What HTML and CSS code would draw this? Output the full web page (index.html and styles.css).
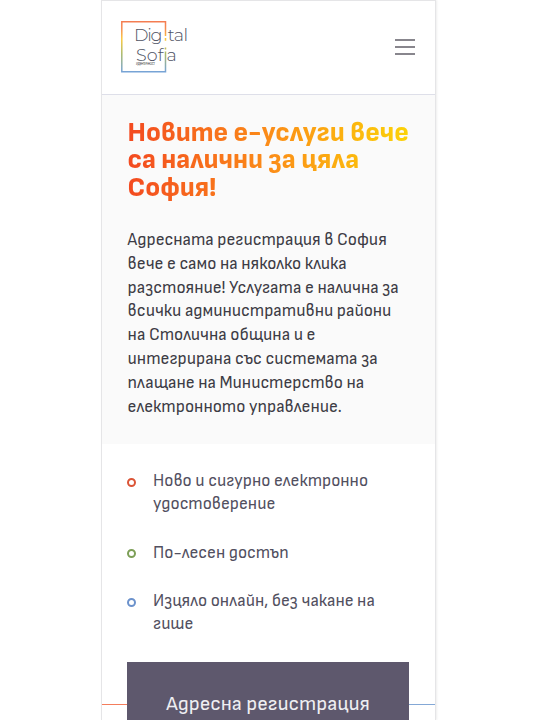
FILE: index.html
```
<!DOCTYPE html>
<html lang="bg">
<head>
<meta charset="utf-8">
<title>Digital Sofia</title>
<link rel="stylesheet" href="styles.css">
</head>
<body>
<div class="page">
  <header class="header">
    <svg class="logo" width="70" height="54" viewBox="0 0 70 54" role="img" aria-label="Digital Sofia">
      <defs>
        <linearGradient id="frame" gradientUnits="userSpaceOnUse" x1="0" y1="1" x2="0" y2="52">
          <stop offset="0" stop-color="#f47c52"/>
          <stop offset=".15" stop-color="#f58a50"/>
          <stop offset=".35" stop-color="#fbc83c"/>
          <stop offset=".65" stop-color="#a9b96c"/>
          <stop offset="1" stop-color="#76a3d8"/>
        </linearGradient>
      </defs>
      <path class="logo-frame" d="M45.500 16V1.800H1.800v50h43.700V31.500M45.500 18v2.700M45.500 27.500v2"/>
      <text class="logo-text" x="14" y="20.700" textLength="28.500">Dig</text>
      <text class="logo-text" x="47.700" y="20.700" textLength="20.500">tal</text>
      <text class="logo-text" x="16" y="40.700" textLength="27.500">Sof</text>
      <text class="logo-text" x="46.500" y="40.700">a</text>
      <text class="logo-note" x="16" y="44.900" textLength="19">ИДЕНТИЧНОСТ</text>
    </svg>
    <button class="menu" aria-label="Меню"><i></i><i></i><i></i></button>
  </header>
  <section class="intro">
    <h1 class="title">Новите е-услуги вече са налични за цяла София!</h1>
    <p class="lead">Адресната регистрация в София<br>вече е само на няколко клика<br>разстояние! Услугата е налична за<br>всички административни райони<br>на Столична община и е<br>интегрирана със системата за<br>плащане на Министерство на<br>електронното управление.</p>
  </section>
  <ul class="benefits">
    <li class="red">Ново и сигурно електронно<br>удостоверение</li>
    <li class="green">По-лесен достъп</li>
    <li class="blue">Изцяло онлайн, без чакане на<br>гише</li>
  </ul>
  <div class="action"><a class="button">Адресна регистрация</a></div>
</div>
</body>
</html>
```
FILE: styles.css
```
*, *::before { box-sizing: border-box; }
body { margin: 0; height: 720px; overflow: hidden; background: #fff; font-family: "Sofia Sans", Roboto, sans-serif; }
.page { width: 335px; height: 720px; margin-left: 101px; overflow: hidden; background: #fff; border: 1px solid #e5e5e7; border-bottom: 0; box-shadow: 1px 0 2px #eee; }
.header { height: 94px; border-bottom: 1px solid #dedfe9; display: flex; justify-content: space-between; align-items: flex-start; padding: 19px 20px 0 18px; }
.logo { display: block; }
.logo-frame { fill: none; stroke: url(#frame); stroke-width: 1.500; }
.logo-text { font: 300 17.500px Montserrat, Lato, sans-serif; fill: #4f5364; }
.logo-note { font: 3px Lato, sans-serif; fill: #444; }
.menu { width: 20px; height: 16px; margin-top: 19px; padding: 0; border: 0; background: none; display: flex; flex-direction: column; justify-content: space-between; }
.menu i { height: 2px; width: 100%; background: #88868d; }
.intro { height: 349px; padding: 24px 25px 0 25.600px; background: #fafafa; white-space: nowrap; }
.title { margin: 0; white-space: normal; font-size: 27.300px; font-weight: 800; line-height: 27.300px; color: transparent; background: linear-gradient(90deg, #f34a20, #fb8c18 50%, #fcd307); background-clip: text; -webkit-background-clip: text; }
.lead { margin: 28px 0 0; font-size: 17.080px; line-height: 23.850px; color: #3d3c45; }
.benefits { list-style: none; margin: 0; padding: 26px 25px 0; font-size: 17.060px; line-height: 23px; color: #52505f; white-space: nowrap; }
.benefits li { padding-left: 26px; position: relative; }
.benefits li + li { margin-top: 26px; }
.benefits li + .blue { margin-top: 25px; }
.benefits li::before { content: ""; position: absolute; left: 0; top: 8px; width: 9px; height: 9px; border: 2px solid; border-radius: 50%; }
.benefits .green::before { color: #7d9f57; top: 7px; }
.benefits .red::before { color: #db5537; }
.benefits .blue::before { color: #6c92cc; }
.action { display: flex; margin-top: 26px; padding: 0 26px 0 25px; background: linear-gradient(90deg, #f47d5c 50%, #84a8d6 50%) 0 42px / 100% 1px no-repeat; }
.button { flex: 1; height: 84px; background: #5e586d; color: #eeeef2; display: flex; justify-content: center; align-items: center; font-size: 20.450px; white-space: nowrap; }
```
